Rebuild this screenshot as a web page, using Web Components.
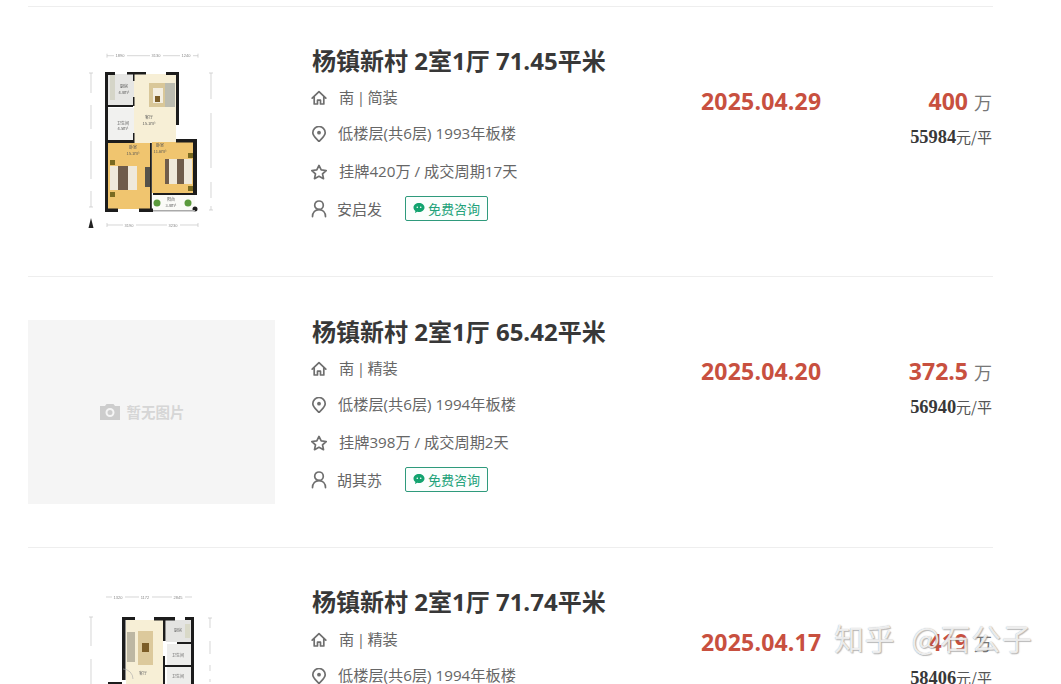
<!DOCTYPE html>
<html><head><meta charset="utf-8">
<style>
html,body{margin:0;padding:0;background:#fff;}
body{width:1061px;height:684px;overflow:hidden;position:relative;font-family:"Open Sans","Noto Sans CJK SC",sans-serif;}
</style></head><body>
<template id="plan-a">
<style>:host{display:block;width:247px;height:184px}svg{display:block;filter:blur(.45px)}</style>
<svg width="247" height="184" viewBox="0 0 247 184">
<g stroke="#c4c4c4" stroke-width=".7" fill="none"><path d="M79 5.700H170M79 3.700v4M170 3.700v4M79 175H170M79 173v4M170 173v4M63 23V157M61 23h4M61 157h4M183 23V160M181 23h4M181 160h4"/></g>
<g fill="#fff"><rect x="86" y="3" width="13" height="6"/><rect x="122" y="3" width="13" height="6"/><rect x="152" y="3" width="13" height="6"/><rect x="95" y="172" width="13" height="6"/><rect x="139" y="172" width="13" height="6"/><rect x="60" y="43" width="6" height="12"/><rect x="60" y="79" width="6" height="12"/><rect x="60" y="129" width="6" height="12"/><rect x="180" y="49" width="6" height="14"/><rect x="180" y="118" width="6" height="14"/><rect x="180" y="148" width="6" height="8"/></g>
<g font-family="Liberation Sans" font-size="4" fill="#8a8a8a" text-anchor="middle">
<text x="92" y="7.200">1890</text><text x="128" y="7.200">3130</text><text x="158" y="7.200">1240</text><text x="101" y="176.500">3190</text><text x="145" y="176.500">3230</text>
</g>
<rect x="106" y="24" width="42" height="70" fill="#f7efd6"/>
<rect x="80" y="24" width="26" height="31" fill="#e6e6e4"/>
<rect x="80" y="58" width="26" height="32" fill="#f1f1ef"/>
<rect x="80" y="93" width="42" height="66" fill="#f0c56f"/>
<rect x="124" y="92" width="41" height="51" fill="#f0c56f"/>
<rect x="125" y="145" width="42" height="15" fill="#fbfbf7"/>
<rect x="82" y="24" width="5" height="26" fill="#d5d5c8"/>
<rect x="121" y="33" width="17" height="24" fill="#d9c799"/><rect x="125" y="38" width="10" height="15" fill="#f4eee0"/><rect x="127" y="46" width="5" height="6" fill="#7c5d28"/>
<rect x="137" y="33" width="10" height="24" fill="#bcbcb0"/>
<rect x="82" y="116" width="27" height="24" fill="#efe9db"/><rect x="90" y="116" width="10" height="24" fill="#6f5c4b"/><rect x="82" y="110" width="5" height="5" fill="#7a6a20"/><rect x="82" y="142" width="5" height="5" fill="#7a6a20"/>
<rect x="137" y="109" width="27" height="25" fill="#efe9db"/><rect x="137" y="109" width="4" height="25" fill="#6f5c4b"/><rect x="149" y="109" width="7" height="25" fill="#6f5c4b"/><rect x="160" y="103" width="5" height="5" fill="#7a6a20"/><rect x="160" y="136" width="5" height="5" fill="#7a6a20"/>
<rect x="117" y="117" width="5" height="20" fill="#55524a"/>
<circle cx="129" cy="153" r="3.500" fill="#5b9a3c"/><circle cx="160" cy="153" r="3.500" fill="#5b9a3c"/>
<g fill="#1c1c1c">
<rect x="77" y="22" width="3" height="140"/><rect x="77" y="22" width="10" height="3"/><rect x="99" y="22" width="19" height="2.500"/><rect x="138" y="22" width="13" height="3"/>
<rect x="148" y="22" width="3" height="53"/>
<rect x="105" y="24" width="1.500" height="7"/><rect x="105" y="47" width="1.500" height="9"/><rect x="80" y="55" width="25" height="2"/>
<rect x="77" y="90" width="28" height="3"/><rect x="105" y="83" width="1.500" height="10"/>
<rect x="122" y="93" width="1.800" height="69"/>
<rect x="125" y="143" width="44" height="2"/>
<rect x="148" y="89" width="21" height="3.500"/><rect x="165" y="89" width="4" height="54"/>
<rect x="77" y="158.500" width="13" height="3.500"/><rect x="111" y="158.500" width="14" height="3.500"/>
<circle cx="167" cy="159" r="2.500"/>
</g>
<rect x="125" y="160" width="42" height="1.500" fill="#aaa"/>
<g font-family="Noto Sans CJK SC" font-size="4" fill="#555" text-anchor="middle">
<text x="96" y="38">厨房</text><text x="96" y="44">4.8m²</text>
<text x="95" y="75">卫生间</text><text x="95" y="80">4.5m²</text>
<text x="121" y="69">客厅</text><text x="121" y="75">15.1m²</text>
<text x="105" y="99">卧室</text><text x="105" y="105">15.1m²</text>
<text x="132" y="97">卧室</text><text x="132" y="103">11.6m²</text>
<text x="143" y="151">阳台</text><text x="143" y="156.500">3.8m²</text>
</g>
<path d="M60.500 178 63 168l2.500 10z" fill="#222"/>
</svg>
</template>
<template id="plan-c">
<style>:host{display:block;width:247px;height:184px}svg{display:block;filter:blur(.45px)}</style>
<svg width="247" height="184" viewBox="0 0 247 184">
<g stroke="#c4c4c4" stroke-width=".7" fill="none"><path d="M78 6H164M63 26V93M61 26h4M182 27V91M180 27h4"/></g>
<g fill="#fff"><rect x="84" y="3" width="13" height="6"/><rect x="111" y="3" width="13" height="6"/><rect x="144" y="3" width="13" height="6"/><rect x="60" y="55" width="6" height="13"/><rect x="179" y="37" width="6" height="13"/><rect x="179" y="63" width="6" height="11"/><rect x="179" y="80" width="6" height="8"/></g>
<g font-family="Liberation Sans" font-size="4" fill="#8a8a8a" text-anchor="middle"><text x="90" y="7.500">1320</text><text x="117" y="7.500">1172</text><text x="150" y="7.500">2845</text></g>
<rect x="98" y="29" width="37" height="65" fill="#f7efd6"/>
<rect x="138" y="29" width="25" height="22" fill="#e4e4e2"/><rect x="139" y="53" width="24" height="21" fill="#ededeb"/><rect x="139" y="76" width="24" height="18" fill="#ededeb"/>
<rect x="110" y="40" width="15" height="34" fill="#dcc99c"/><rect x="114" y="52" width="7" height="9" fill="#7c5d28"/><rect x="99" y="41" width="8" height="30" fill="#bdb7a3"/>
<rect x="157" y="33" width="5" height="14" fill="#d9d9c8"/>
<g fill="#1c1c1c"><rect x="94" y="26" width="3.500" height="63"/><rect x="94" y="26" width="13" height="3"/><rect x="126" y="26" width="21" height="3.500"/><rect x="157" y="26" width="9" height="3"/><rect x="163" y="26" width="3" height="68"/><rect x="135" y="26" width="2.500" height="24"/><rect x="135" y="65" width="2" height="29"/><rect x="149" y="51" width="17" height="2"/><rect x="137" y="74" width="29" height="2"/><rect x="80" y="91" width="14" height="2.500"/></g>
<path d="M95 78a10 10 0 0 1 10 10" fill="none" stroke="#aaa" stroke-width=".6"/>
<g font-family="Noto Sans CJK SC" font-size="4" fill="#666" text-anchor="middle"><text x="150" y="41">厨房</text><text x="150" y="66">卫生间</text><text x="150" y="87">卫生间</text><text x="115" y="84">客厅</text></g>
</svg>
</template>
<template id="plan-none">
<style>:host{display:flex;box-sizing:border-box;width:247px;height:184px;padding-right:19px;background:#f5f5f5;align-items:center;justify-content:center;gap:7px;font:bold 14.500px/1 "Noto Sans CJK SC",sans-serif;color:#d6d6d6}svg{display:block}</style>
<svg width="20" height="16" viewBox="0 0 20 16"><path fill="#cdcdcd" fill-rule="evenodd" d="M0 2h5l1.500-2h7L15 2h5v14H0zM10 4a4.500 4.500 0 1 0 0 9 4.500 4.500 0 0 0 0-9zm0 2a2.500 2.500 0 1 1 0 5 2.500 2.500 0 0 1 0-5z"/></svg><span>暂无图片</span>
</template>

<script>
const ST='fill="none" stroke="#6f6f6f" stroke-width="1.700" stroke-linejoin="round" stroke-linecap="round"';
const ICON={
home:`<path d="M1.200 8.200 8 1.600l6.800 6.600M3.200 6.800V14h3.300v-3.800h3V14h3.300V6.800" ${ST}/>`,
pin:`<path d="M8 15.600C5 12.100 1.800 9.800 1.800 6.700a6.200 6.200 0 0 1 12.400 0c0 3.100-3.200 5.400-6.200 8.900z" ${ST}/><circle cx="8" cy="6.700" r="1.900" fill="#6f6f6f"/>`,
star:`<path d="M8 1.400 10.200 5.900l5 .6-3.700 3.400 1 4.800L8 12.300l-4.500 2.400 1-4.800L.8 6.500l5-.6z" ${ST}/>`,
user:`<ellipse cx="8" cy="5.200" rx="4.300" ry="4.200" ${ST}/><path d="M1.500 16.600c0-4.300 2.700-7 6.500-7s6.500 2.700 6.500 7" ${ST}/>`
};
class ListIcon extends HTMLElement{connectedCallback(){if(this.shadowRoot)return;const tall=this.getAttribute('name')==='user';this.attachShadow({mode:'open'}).innerHTML=`<style>:host{display:block;width:16px;height:${tall?18:16}px;flex:none}svg{display:block}</style><svg width="16" height="${tall?18:16}" viewBox="0 0 16 ${tall?18:16}">${ICON[this.getAttribute('name')]}</svg>`}}
customElements.define('list-icon',ListIcon);

class ChatTag extends HTMLElement{connectedCallback(){if(this.shadowRoot)return;this.attachShadow({mode:'open'}).innerHTML=`<style>:host{display:inline-flex;box-sizing:border-box;width:83px;height:25px;border:1px solid #2f9a7c;border-radius:2px;align-items:center;justify-content:center;gap:3px;color:#22a27a;font:13px/1 "Noto Sans CJK SC",sans-serif;background:#fbfefd}svg{display:block}</style><svg width="12" height="12" viewBox="0 0 12 12"><path d="M6 1c3 0 5.500 2 5.500 4.500S9 10 6 10c-.6 0-1.200-.1-1.700-.2L2 11l.4-2C1.200 8.100.5 6.900.5 5.500.5 3 3 1 6 1z" fill="#13a36f"/><circle cx="4.300" cy="5.200" r=".8" fill="#fff"/><circle cx="7.700" cy="5.200" r=".8" fill="#fff"/></svg><slot></slot>`}}
customElements.define('chat-tag',ChatTag);

class InfoRow extends HTMLElement{connectedCallback(){if(this.shadowRoot)return;this.attachShadow({mode:'open'}).innerHTML=`<style>:host{display:flex;align-items:center;height:37px;color:#666;font:15.200px/1 "Open Sans","Noto Sans CJK SC",sans-serif;white-space:nowrap}list-icon{margin-right:var(--gap,12px)}.t{display:flex;align-items:center}</style><list-icon name="${this.getAttribute('icon')}"></list-icon><span class="t"><slot></slot></span>`}}
customElements.define('info-row',InfoRow);

class PlanImage extends HTMLElement{connectedCallback(){if(this.shadowRoot)return;const t=document.getElementById('plan-'+this.getAttribute('kind'));this.attachShadow({mode:'open'}).appendChild(t.content.cloneNode(true))}}
customElements.define('plan-image',PlanImage);

class HouseItem extends HTMLElement{connectedCallback(){if(this.shadowRoot)return;const a=k=>this.getAttribute(k);this.attachShadow({mode:'open'}).innerHTML=`<style>
:host{display:flex;box-sizing:border-box;height:270px;padding-top:43px;border-bottom:1px solid #eee;font-family:"Open Sans","Noto Sans CJK SC",sans-serif}
.pic{width:247px;flex:none;margin-right:36px}
.mid{width:389px;flex:none}
h3{margin:calc(-7.500px + var(--title-nudge,0px)) 0 0 1px;font:bold 24px/36px "Open Sans","Noto Sans CJK SC",sans-serif;color:#383838;white-space:nowrap}
.rows{margin-top:calc(1.500px + var(--rows-nudge,0px))}
.date{width:120px;flex:none;font:bold 23px/28px "Open Sans",sans-serif;letter-spacing:.2px;color:#c8503f;padding-top:37px;white-space:nowrap;margin-left:1px}
.right{flex:1;text-align:right;color:#666;padding:37px 1px 0 0}
.total{font:bold 23px/28px "Open Sans",sans-serif;color:#c8503f;white-space:nowrap}
.total small{font:18px/28px "Noto Sans CJK SC",sans-serif;color:#777}
.unit{font:15px/20px "Noto Sans CJK SC",sans-serif;color:#555;margin-top:11px;white-space:nowrap}
.unit b{font:bold 18.400px/20px "Liberation Serif",serif;color:#383838}
</style>
<div class="pic"><plan-image kind="${a('kind')}"></plan-image></div>
<div class="mid"><h3>${a('title')}</h3><div class="rows">
<info-row icon="home" style="--gap:12px;height:36px;word-spacing:-1.500px">${a('face')}</info-row>
<info-row icon="pin" style="--gap:11px;height:36px">${a('floor')}</info-row>
<info-row icon="star" style="--gap:12px;height:40px">${a('deal')}</info-row>
<info-row icon="user" style="--gap:10px;height:34px;font-size:15px">${a('agent')}<chat-tag style="margin:-2px 0 0 23px">免费咨询</chat-tag></info-row>
</div></div>
<div class="date">${a('date')}</div>
<div class="right"><div class="total">${a('price')} <small>万</small></div><div class="unit"><b>${a('unit')}</b>元/平</div></div>`}}
customElements.define('house-item',HouseItem);

class HouseList extends HTMLElement{connectedCallback(){if(this.shadowRoot)return;this.attachShadow({mode:'open'}).innerHTML=`<style>:host{display:block;box-sizing:border-box;width:965px;margin:0 0 0 28px}.top{height:6px;border-bottom:1px solid #eee}</style><div class="top"></div><slot></slot>`}}
customElements.define('house-list',HouseList);

class WaterMark extends HTMLElement{connectedCallback(){if(this.shadowRoot)return;this.attachShadow({mode:'open'}).innerHTML=`<style>:host{position:absolute;left:834px;top:617px;color:rgba(255,255,255,.82);font:30px/40px "Noto Sans CJK SC",sans-serif;white-space:nowrap;letter-spacing:.6px;word-spacing:9px;text-shadow:0 0 1px rgba(110,110,110,.6),1px 1px 1px rgba(110,110,110,.45)}</style><slot></slot>`}}
customElements.define('water-mark',WaterMark);
</script>

<house-list>
<house-item kind="a" title="杨镇新村 2室1厅 71.45平米" face="南 | 简装" floor="低楼层(共6层) 1993年板楼" deal="挂牌420万 / 成交周期17天" agent="安启发" date="2025.04.29" price="400" unit="55984"></house-item>
<house-item style="height:271px;--title-nudge:1px" kind="none" title="杨镇新村 2室1厅 65.42平米" face="南 | 精装" floor="低楼层(共6层) 1994年板楼" deal="挂牌398万 / 成交周期2天" agent="胡其苏" date="2025.04.20" price="372.5" unit="56940"></house-item>
<house-item style="--rows-nudge:1px" kind="c" title="杨镇新村 2室1厅 71.74平米" face="南 | 精装" floor="低楼层(共6层) 1994年板楼" deal="挂牌450万 / 成交周期5天" agent="胡其苏" date="2025.04.17" price="419" unit="58406"></house-item>
</house-list>
<water-mark>知乎 @石公子</water-mark>
</body></html>
